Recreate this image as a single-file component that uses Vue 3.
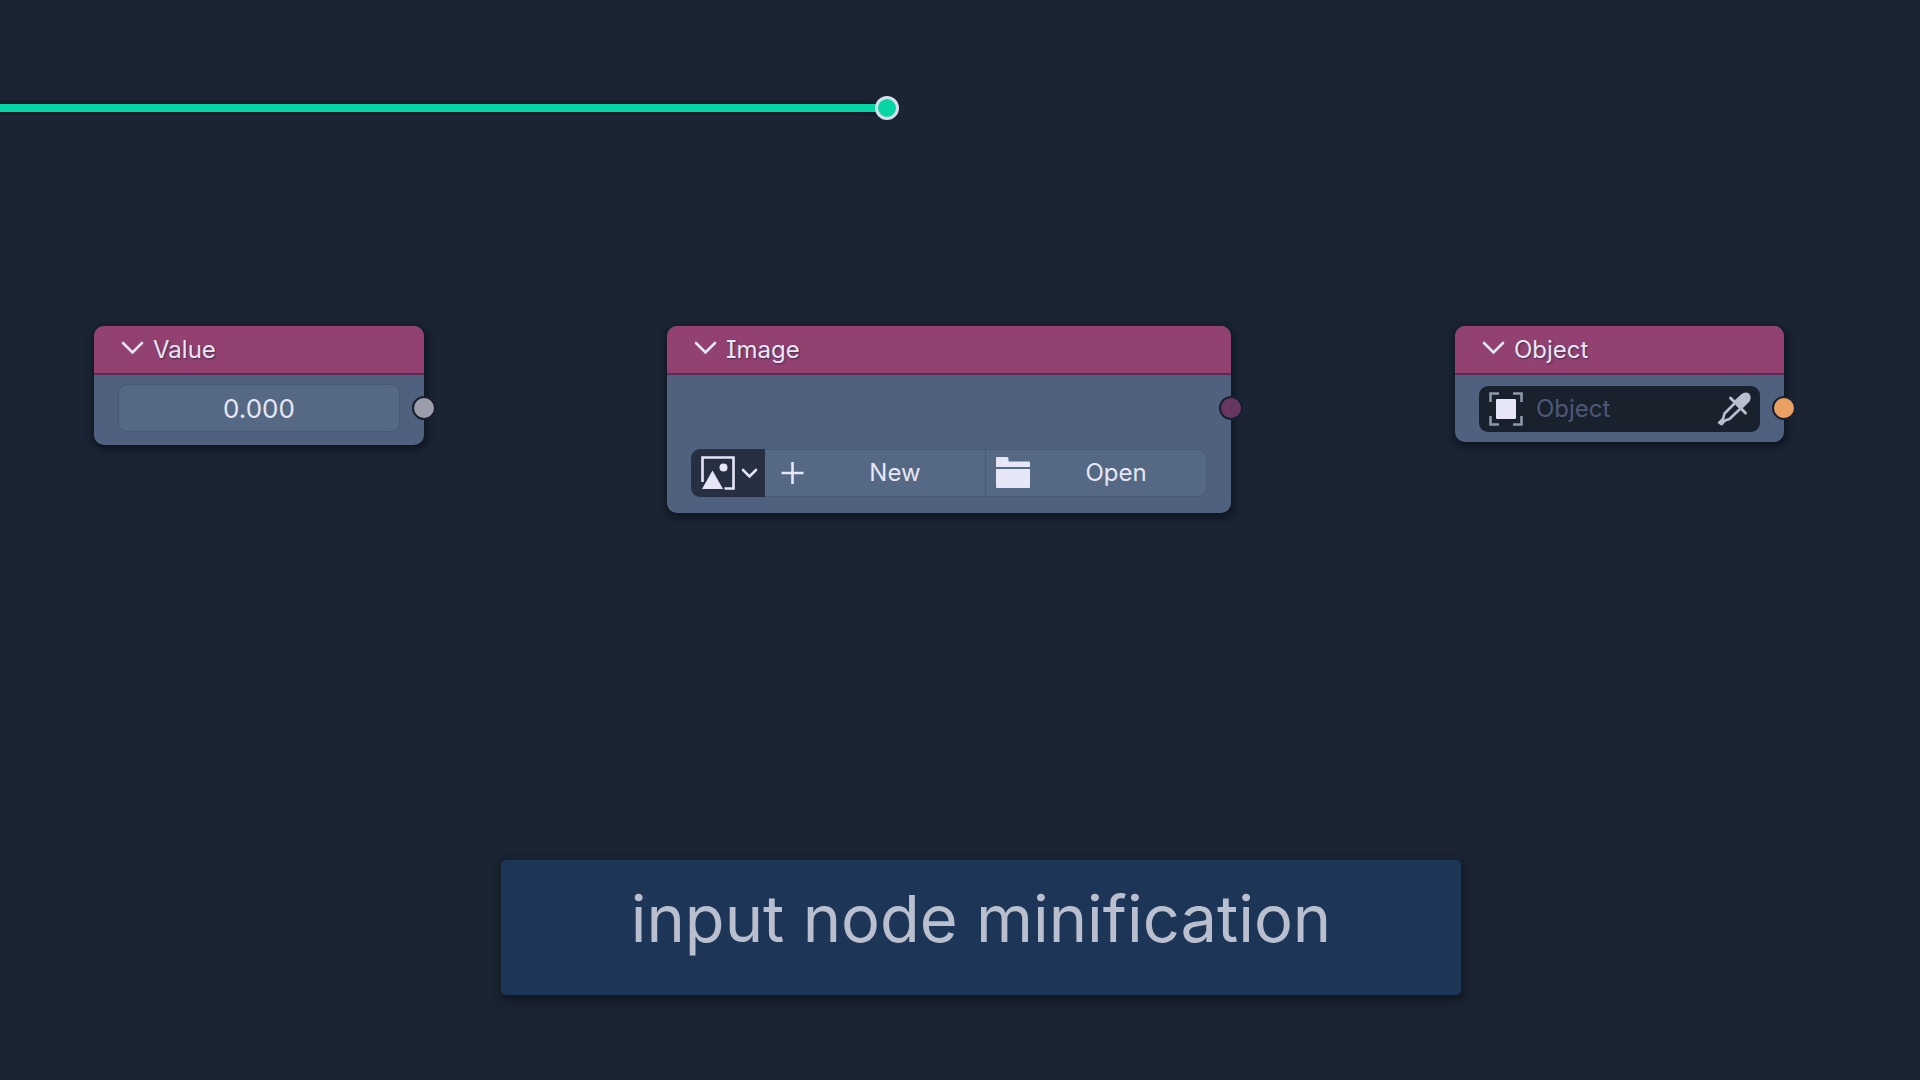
<script setup>
import { ref } from 'vue'

const value = ref('0.000')
const object = ref('')
const progress = 46.2
</script>

<template>
  <main class="page">
    <div class="track">
      <div class="track-line" :style="{ width: progress + '%' }"><span class="track-knob"></span></div>
    </div>

    <section class="nodes">
      <article class="node value-node">
        <header class="node-head">
          <button class="fold" type="button" aria-label="Collapse Value">
            <svg viewBox="0 0 24 14" width="24" height="14"><path d="M2 2l9.500 9.500L21 2" /></svg>
          </button>
          <h2>Value</h2>
        </header>
        <div class="node-body">
          <input v-model="value" class="number" type="text" aria-label="Value" />
          <span class="socket grey"></span>
        </div>
      </article>

      <article class="node image-node">
        <header class="node-head">
          <button class="fold" type="button" aria-label="Collapse Image">
            <svg viewBox="0 0 24 14" width="24" height="14"><path d="M2 2l9.500 9.500L21 2" /></svg>
          </button>
          <h2>Image</h2>
        </header>
        <div class="node-body">
          <div class="actions">
            <button class="picker" type="button" aria-label="Browse images" aria-haspopup="listbox">
              <svg viewBox="0 0 34 34" width="34" height="34">
                <path d="M1.500 26V1.500H32.500V32.500H23.500" fill="none" stroke="#e6e6f6" stroke-width="2.600" />
                <path d="M1 33L11.500 14.500L22 33Z" fill="#e6e6f6" />
                <circle cx="22.500" cy="11.500" r="4" fill="#e6e6f6" />
              </svg>
              <svg class="caret" viewBox="0 0 18 12" width="18" height="12"><path d="M2 3l6.500 6.500L15 3" /></svg>
            </button>
            <button class="action" type="button">
              <span class="slot">
                <svg viewBox="0 0 24 24" width="24" height="24"><path d="M12.500 1v22M1.500 12h22" stroke="#e6e6f6" stroke-width="2.600" /></svg>
              </span>
              <span class="label">New</span>
            </button>
            <button class="action" type="button">
              <span class="slot">
                <svg viewBox="0 0 34 32" width="34" height="32">
                  <path d="M0 10V1Q0 0 1 0H11Q12.500 0 12.500 1.500V4.500H33Q34 4.500 34 5.500V10Z" fill="#e6e6f6" />
                  <path d="M0 12H34V30Q34 31 33 31H1Q0 31 0 30Z" fill="#e6e6f6" />
                </svg>
              </span>
              <span class="label">Open</span>
            </button>
          </div>
          <span class="socket plum"></span>
        </div>
      </article>

      <article class="node object-node">
        <header class="node-head">
          <button class="fold" type="button" aria-label="Collapse Object">
            <svg viewBox="0 0 24 14" width="24" height="14"><path d="M2 2l9.500 9.500L21 2" /></svg>
          </button>
          <h2>Object</h2>
        </header>
        <div class="node-body">
          <div class="object-field">
            <svg viewBox="0 0 34 34" width="34" height="34">
              <path d="M1.500 10V1.500H10M24 1.500H32.500V10M32.500 24V32.500H24M10 32.500H1.500V24" fill="none" stroke="#8d98ab" stroke-width="2.600" />
              <rect x="7" y="7" width="20" height="20" rx="1" fill="#e6e6f6" />
            </svg>
            <input v-model="object" type="text" placeholder="Object" aria-label="Object" />
            <button class="dropper" type="button" aria-label="Pick object">
              <svg viewBox="0 0 34 34" width="34" height="34">
                <path d="M17.500 8.500L24 2.500Q28 -1 32 1.500Q35 5 32.500 9.500L25.500 16.500Z" fill="#b9bfce" />
                <path d="M13.500 6L28.500 21" stroke="#b9bfce" stroke-width="3" stroke-linecap="round" />
                <path d="M17.500 11.500L7.500 21.500L6 27L1.500 31.500M23 17L12.500 27L8 28.500L4 33" fill="none" stroke="#b9bfce" stroke-width="2.600" stroke-linejoin="round" />
                <path d="M2.500 32L7 27.500" stroke="#b9bfce" stroke-width="3" />
              </svg>
            </button>
          </div>
          <span class="socket orange"></span>
        </div>
      </article>
    </section>

    <h1 class="banner">input node minification</h1>
  </main>
</template>

<style>
body {
  margin: 0;
  background: #1b2432;
}
</style>

<style scoped>
.page {
  min-height: 100vh;
  box-sizing: border-box;
  padding: 104px 0 85px;
  display: flex;
  flex-direction: column;
  overflow: hidden;
  background: #1b2432;
  color: #e6e6f6;
  font: 400 24px/32px Inter, "Liberation Sans", sans-serif;
}

button,
input {
  box-sizing: border-box;
  margin: 0;
  padding: 0;
  border: 0;
  background: none;
  color: inherit;
  font: inherit;
}

svg {
  display: block;
  flex: none;
  overflow: visible;
}

.track {
  margin-bottom: 214px;
}

.track-line {
  position: relative;
  height: 8px;
  background: #06d6a4;
  box-shadow: 0 0 3px 2px #131b27;
}

.track-knob {
  position: absolute;
  right: -12px;
  top: -8px;
  box-sizing: border-box;
  width: 24px;
  height: 24px;
  border: 3px solid #d5e0ea;
  border-radius: 50%;
  background: #06d6a4;
}

.nodes {
  display: grid;
  grid-template-columns: 94fr 330px 243fr 564px 224fr 329px 136fr;
  align-items: start;
}

.value-node {
  grid-column: 2;
}

.image-node {
  grid-column: 4;
}

.object-node {
  grid-column: 6;
}

.node {
  border-radius: 10px;
  background: #50617f;
  box-shadow: 1px 3px 7px 2px #0d1621;
}

.node-head {
  display: flex;
  align-items: center;
  gap: 8px;
  height: 47px;
  padding-left: 27px;
  border-bottom: 2px solid #582d53;
  border-radius: 10px 10px 0 0;
  background: #924170;
}

.node-head h2 {
  margin: 0;
  font: inherit;
  font-feature-settings: "cv08";
  text-shadow: 1px 1px 2px #4c2a4d;
}

.fold {
  padding-bottom: 4px;
}

.fold path,
.caret path {
  fill: none;
  stroke: #e6e6f6;
  stroke-width: 2.6;
  stroke-linecap: round;
}

.node-body {
  position: relative;
  padding: 9px 24px 13px;
}

.number {
  display: block;
  width: 100%;
  height: 48px;
  border: 1px solid #485877;
  border-radius: 9px;
  background: #556984;
  font-size: 26px;
  text-align: center;
}

.socket {
  position: absolute;
  right: -12px;
  top: 21px;
  box-sizing: border-box;
  width: 24px;
  height: 24px;
  border: 2px solid #172030;
  border-radius: 50%;
}

.grey {
  background: #9d9dab;
}

.plum {
  background: #683761;
}

.orange {
  background: #e8a063;
}

.image-node .node-body {
  padding: 74px 24px 16px;
}

.actions {
  display: flex;
  height: 48px;
}

.picker {
  display: flex;
  align-items: center;
  gap: 6px;
  width: 74px;
  padding-left: 10px;
  border-radius: 9px 0 0 9px;
  background: #272f43;
}

.action {
  display: flex;
  flex: 1;
  align-items: center;
  border: 1px solid #485877;
  border-left: 0;
  background: #556984;
}

.action:last-child {
  border-radius: 0 9px 9px 0;
}

.slot {
  display: flex;
  justify-content: center;
  width: 34px;
  margin-left: 10px;
}

.label {
  flex: 1;
  padding-right: 4px;
  text-align: center;
}

.object-node .node-body {
  padding: 11px 24px 10px;
}

.object-field {
  display: flex;
  align-items: center;
  height: 46px;
  padding: 0 9px 0 10px;
  border-radius: 9px;
  background: #19212d;
}

.object-field input {
  flex: 1;
  min-width: 0;
  padding: 0 13px;
}

.object-field input::placeholder {
  color: #4c5878;
  opacity: 1;
}

.banner {
  box-sizing: border-box;
  align-self: center;
  width: 50%;
  height: 135px;
  margin: auto 0 0 42px;
  border-radius: 5px;
  background: #1d3557;
  box-shadow: 1px 4px 9px 2px #101923;
  color: #b9bfce;
  font-size: 65px;
  font-weight: 400;
  line-height: 118px;
  text-align: center;
  white-space: nowrap;
}
</style>
